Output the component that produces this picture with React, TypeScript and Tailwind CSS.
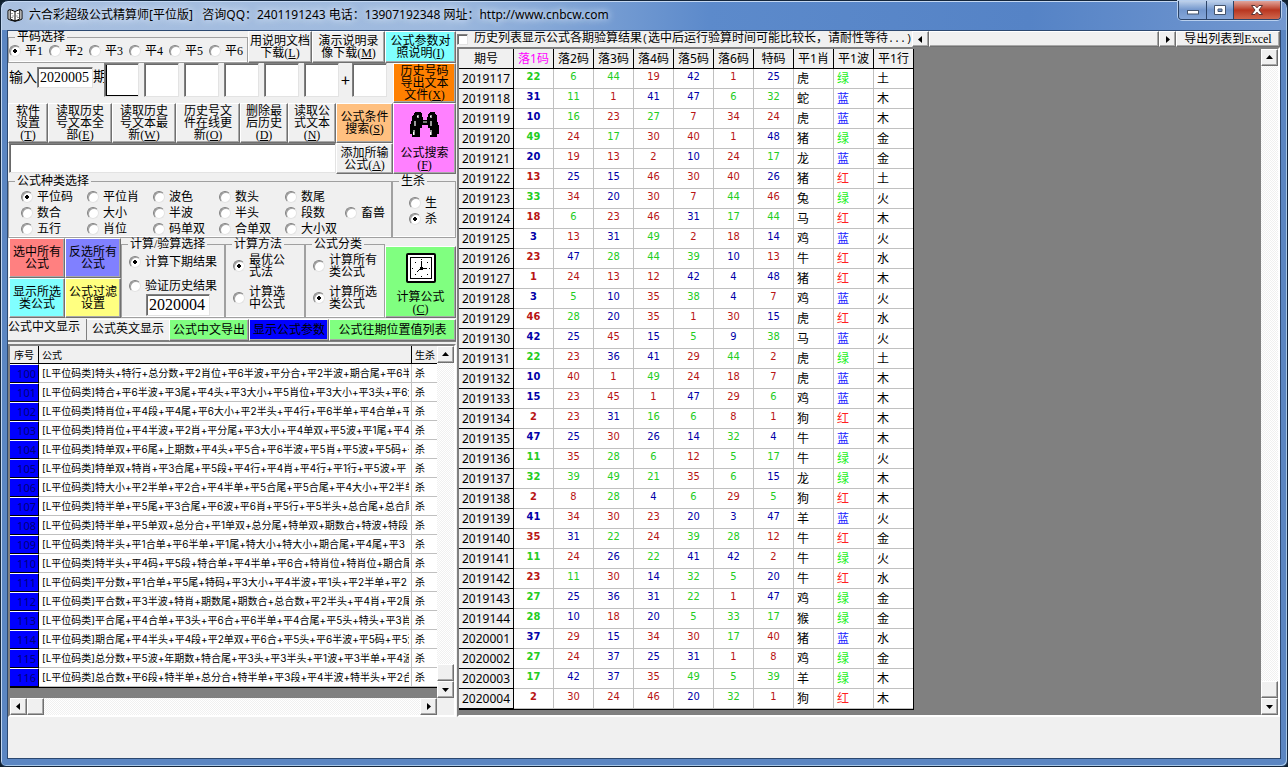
import { FC, ReactNode } from "react";
import clsx from "clsx";

const SONG = "font-['Liberation_Serif','Noto_Sans_CJK_SC',serif]";
const YAHEI = "font-['Noto_Sans','Noto_Sans_CJK_SC',sans-serif]";

const RED = [1, 2, 7, 8, 12, 13, 18, 19, 23, 24, 29, 30, 34, 35, 40, 45, 46];
const BLUE = [3, 4, 9, 10, 14, 15, 20, 25, 26, 31, 36, 37, 41, 42, 47, 48];

type Wave = "红" | "蓝" | "绿";

const waveOf = (n: number): Wave => (RED.includes(n) ? "红" : BLUE.includes(n) ? "蓝" : "绿");

const numberColor: Record<Wave, string> = {
  红: "text-[#b81414]",
  蓝: "text-[#0000a8]",
  绿: "text-[#22cc22]",
};

const waveColor: Record<Wave, string> = {
  红: "text-[#ff2020]",
  蓝: "text-[#2020ff]",
  绿: "text-[#20f020]",
};

// issue, six numbers + special number, zodiac, element
type Draw = [string, number[], string, string];

const draws: Draw[] = [
  ["2019117", [22, 6, 44, 19, 42, 1, 25], "虎", "土"],
  ["2019118", [31, 11, 1, 41, 47, 6, 32], "蛇", "木"],
  ["2019119", [10, 16, 23, 27, 7, 34, 24], "虎", "木"],
  ["2019120", [49, 24, 17, 30, 40, 1, 48], "猪", "金"],
  ["2019121", [20, 19, 13, 2, 10, 24, 17], "龙", "金"],
  ["2019122", [13, 25, 15, 46, 30, 40, 26], "猪", "土"],
  ["2019123", [33, 34, 20, 30, 7, 44, 46], "兔", "火"],
  ["2019124", [18, 6, 23, 46, 31, 17, 44], "马", "木"],
  ["2019125", [3, 13, 31, 49, 2, 18, 14], "鸡", "火"],
  ["2019126", [23, 47, 28, 44, 39, 10, 13], "牛", "水"],
  ["2019127", [1, 24, 13, 12, 42, 4, 48], "猪", "木"],
  ["2019128", [3, 5, 10, 35, 38, 4, 7], "鸡", "火"],
  ["2019129", [46, 28, 20, 35, 1, 30, 15], "虎", "水"],
  ["2019130", [42, 25, 45, 15, 5, 9, 38], "马", "火"],
  ["2019131", [22, 23, 36, 41, 29, 44, 2], "虎", "土"],
  ["2019132", [10, 40, 1, 49, 24, 18, 7], "虎", "木"],
  ["2019133", [15, 23, 45, 1, 47, 29, 6], "鸡", "木"],
  ["2019134", [2, 23, 31, 16, 6, 8, 1], "狗", "木"],
  ["2019135", [47, 25, 30, 26, 14, 32, 4], "牛", "木"],
  ["2019136", [11, 35, 28, 6, 12, 5, 17], "牛", "火"],
  ["2019137", [32, 39, 49, 21, 35, 6, 15], "龙", "木"],
  ["2019138", [2, 8, 28, 4, 6, 29, 5], "狗", "木"],
  ["2019139", [41, 34, 30, 23, 20, 3, 47], "羊", "火"],
  ["2019140", [35, 31, 22, 24, 39, 28, 12], "牛", "金"],
  ["2019141", [11, 24, 26, 22, 41, 42, 2], "牛", "火"],
  ["2019142", [23, 11, 30, 14, 32, 5, 20], "牛", "水"],
  ["2019143", [27, 25, 36, 31, 22, 1, 47], "鸡", "金"],
  ["2019144", [28, 10, 18, 20, 5, 33, 17], "猴", "金"],
  ["2020001", [37, 29, 15, 34, 30, 17, 40], "猪", "水"],
  ["2020002", [27, 24, 37, 25, 31, 1, 8], "鸡", "金"],
  ["2020003", [17, 42, 37, 35, 49, 5, 39], "羊", "木"],
  ["2020004", [2, 30, 24, 46, 20, 32, 1], "狗", "木"],
];

const drawColumns = ["期号", "落1码", "落2码", "落3码", "落4码", "落5码", "落6码", "特码", "平1肖", "平1波", "平1行"];

const formulas = [
  "特头+特行+总分数+平2肖位+平6半波+平分合+平2半波+期合尾+平6半",
  "特合+平6半波+平3尾+平4头+平3大小+平5肖位+平3大小+平3头+平6大",
  "特肖位+平4段+平4尾+平6大小+平2半头+平4行+平6半单+平4合单+平",
  "特肖位+平4半波+平2肖+平分尾+平3大小+平4单双+平5波+平1尾+平4",
  "特单双+平6尾+上期数+平4头+平5合+平6半波+平5肖+平5波+平5码+平",
  "特单双+特肖+平3合尾+平5段+平4行+平4肖+平4行+平1行+平5波+平",
  "特大小+平2半单+平2合+平4半单+平5合尾+平5合尾+平4大小+平2半单",
  "特半单+平5尾+平3合尾+平6波+平6肖+平5行+平5半头+总合尾+总合尾",
  "特半单+平5单双+总分合+平1单双+总分尾+特单双+期数合+特波+特段",
  "特半头+平1合单+平6半单+平1尾+特大小+特大小+期合尾+平4尾+平3",
  "特半头+平4码+平5段+特合单+平4半单+平6合+特肖位+特肖位+期合尾",
  "平分数+平1合单+平5尾+特码+平3大小+平4半波+平1头+平2半单+平2",
  "平合数+平3半波+特肖+期数尾+期数合+总合数+平2半头+平4肖+平2尾",
  "平合尾+平4合单+平3头+平6合+平6半单+平4合尾+平5头+特头+平3肖",
  "期合尾+平4半头+平4段+平2单双+平6合+平5头+平6半波+平5码+平5波",
  "总分数+平5波+年期数+特合尾+平3头+平3半头+平1波+平3半单+平4波",
  "总合数+平6段+特半单+总分合+特半单+平3段+平4半波+特半头+平2合",
];

const kinds = [
  ["平位码", "平位肖", "波色", "数头", "数尾", ""],
  ["数合", "大小", "半波", "半头", "段数", "畜兽"],
  ["五行", "肖位", "码单双", "合单双", "大小双", ""],
];

type PushButtonProps = {
  lines: string[];
  hotkey?: string;
  className?: string;
  icon?: ReactNode;
};

// raised button; the hotkey goes in brackets after the last line
const PushButton: FC<PushButtonProps> = ({ lines, hotkey, className = "bg-[#f0f0f0]", icon }) => (
  <button
    type="button"
    className={clsx(
      "flex min-w-0 flex-col items-center justify-center overflow-hidden whitespace-nowrap border border-t-white border-l-white border-r-[#707070] border-b-[#707070] leading-3 shadow-[inset_-1px_-1px_0_#a8a8a8]",
      className
    )}
  >
    {icon}
    {lines.map((line, i) => (
      <span key={i} className="block">
        {line}
        {hotkey && i === lines.length - 1 && (
          <>
            (<u>{hotkey}</u>)
          </>
        )}
      </span>
    ))}
  </button>
);

type RadioProps = {
  name: string;
  label: string[];
  checked?: boolean;
  className?: string;
};

const Radio: FC<RadioProps> = ({ name, label, checked, className = "gap-1" }) => (
  <label className={clsx("flex items-center whitespace-nowrap leading-3", className)}>
    <input
      type="radio"
      name={name}
      defaultChecked={checked}
      className="size-3 shrink-0 appearance-none rounded-full border border-[#808080] border-r-[#e3e3e3] border-b-[#e3e3e3] bg-white shadow-[inset_1px_1px_0_#a0a0a0] checked:bg-[radial-gradient(circle,#000_0_2px,#fff_2px)]"
    />
    <span>
      {label.map((line) => (
        <span key={line} className="block">
          {line}
        </span>
      ))}
    </span>
  </label>
);

type GroupProps = {
  title: string;
  className?: string;
  children: ReactNode;
};

const Group: FC<GroupProps> = ({ title, className, children }) => (
  <fieldset className={clsx("min-w-0 border border-[#a0a0a0] shadow-[inset_0_-1px_0_#fff]", className)}>
    <legend className="ml-1.5 px-0.5 leading-3">{title}</legend>
    {children}
  </fieldset>
);

const arrows = {
  up: "M4 9h7L7.5 5z",
  down: "M4 6h7L7.5 10z",
  left: "M9 4v7L5 7.5z",
  right: "M6 4v7l4-3.5z",
};

const raised = "border border-t-white border-l-white border-r-[#707070] border-b-[#707070] bg-[#f0f0f0] shadow-[inset_-1px_-1px_0_#a8a8a8]";
const track = "bg-[repeating-conic-gradient(#fff_0_25%,#f0f0f0_0_50%)] bg-[length:2px_2px]";

const ScrollArrow: FC<{ dir: keyof typeof arrows }> = ({ dir }) => (
  <button type="button" aria-label={dir} className={clsx("flex h-full max-h-[17px] min-h-4 w-[17px] shrink-0 items-center justify-center", raised)}>
    <svg viewBox="0 0 15 15" className="size-[15px] shrink-0">
      <path d={arrows[dir]} fill="#000" />
    </svg>
  </button>
);

const VScroll: FC = () => (
  <div className={clsx("grid w-[17px] shrink-0 grid-rows-[17px_1fr_17px_17px]", track)}>
    <ScrollArrow dir="up" />
    <div />
    <div className={raised} />
    <ScrollArrow dir="down" />
  </div>
);

const BookIcon = () => (
  <svg viewBox="0 0 16 14" className="h-3.5 w-4 shrink-0">
    <path d="M1 2.5 3 1.5 8 3.5 13 1.5 15 2.5V11L13 12 8 13.3 3 12 1 11z" fill="#fff" stroke="#000" />
    <path d="M8 3.5V13M3.2 2v9L8 13M12.8 2v9L8 13" fill="none" stroke="#000" />
    <path d="M5 5v1M6 7.500v1M5 9v1M11 5v1M10 7.500v1M11 9v1" stroke="#444" />
  </svg>
);

const BinocularsIcon = () => (
  <svg viewBox="0 0 30 25" className="mb-2.5 h-[25px] w-[30px]" shapeRendering="crispEdges">
    <path d="M5 0h5l2 2v3h1v3h4V5h1V2l2-2h5v2l2 2v4l1 3 1 3v8h-2v3h-7v-9h-2v-3h-6v3h-2v9H2v-3H0v-8l1-3 1-3V4l2-2z" fill="#000" />
    <path d="M7 3h2v3H7zM20 3h2v3h-2zM4 9h2v5H4zM20 9h2v5h-2zM3 18h2v5H3zM20 18h2v5h-2z" fill="#999" />
    <path d="M13 9h4v2h-4z" fill="#777" />
    <path d="M7 4h1v1H7zM20 4h1v1h-1zM3 20h1v3H3zM20 20h1v3h-1z" fill="#fff" />
  </svg>
);

const ClockIcon = () => (
  <svg viewBox="0 0 30 30" className="mb-2 size-[30px]">
    <rect x="1" y="1" width="28" height="28" rx="1" fill="#fff" stroke="#000" strokeWidth="2" />
    <rect x="4.5" y="4.5" width="21" height="21" fill="#fff" stroke="#000" />
    <path d="M15.500 8v8M11 19l4-4M15 15.500h6" stroke="#000" fill="none" />
    <path d="M14 14h3v3h-3zM15 6h1v1h-1zM15 23h1v1h-1zM6 15h1v1H6zM23 15h1v1h-1zM9 9h1v1H9zM21 9h1v1h-1zM9 21h1v1H9zM21 21h1v1h-1z" fill="#000" />
  </svg>
);

const TitleBar = () => (
  <header className={clsx("flex h-[29px] shrink-0 items-start justify-between text-xs", YAHEI)}>
    <h1 className="flex items-center gap-1.5 pt-1 leading-5 whitespace-pre text-black [text-shadow:0_0_6px_#dfeafa,0_0_8px_#dfeafa]">
      <BookIcon />
      {"六合彩超级公式精算师[平位版]   咨询QQ：2401191243 电话：13907192348 网址：http://www.cnbcw.com"}
    </h1>
    <div className="flex h-[19px] overflow-hidden rounded-b border border-t-0 border-[#2c4468] shadow-[0_0_0_1px_#b8cfee]">
      <button type="button" aria-label="最小化" className="flex w-7 items-center justify-center border-r border-[#2c4468] bg-linear-to-b from-[#bdd0ea] via-[#7296cc] to-[#84a6d8]">
        <svg viewBox="0 0 12 10" className="h-2.5 w-3">
          <rect x=".5" y="5.500" width="11" height="3.500" fill="#fff" stroke="#44546c" />
        </svg>
      </button>
      <button type="button" aria-label="最大化" className="flex w-[27px] items-center justify-center border-r border-[#2c4468] bg-linear-to-b from-[#bdd0ea] via-[#7296cc] to-[#84a6d8]">
        <svg viewBox="0 0 12 10" className="h-2.5 w-3">
          <path d="M.5.5h11v9H.5zM4 4v2.500h4V4z" fill="#fff" stroke="#44546c" fillRule="evenodd" />
        </svg>
      </button>
      <button type="button" aria-label="关闭" className="flex w-[46px] items-center justify-center bg-linear-to-b from-[#e0a59c] via-[#b8351f] to-[#d0664c]">
        <svg viewBox="0 0 12 10" className="h-2.5 w-3">
          <path d="M.5.5h3.500L6 2.800 8 .5h3.500L8 5l3.500 4.500H8L6 7.200 4 9.500H.5L4 5z" fill="#fff" stroke="#5a3434" />
        </svg>
      </button>
    </div>
  </header>
);

const sunken = "border border-[#808080] border-r-[#e3e3e3] border-b-[#e3e3e3] bg-white shadow-[inset_1px_1px_0_#696969]";

const NumberBox: FC<{ index: number }> = ({ index }) => (
  <input
    aria-label={`号码${index}`}
    className={clsx(
      "h-[34px] w-[35px] shrink-0 text-center text-base outline-none",
      sunken,
      index === 1 && "shadow-[inset_1px_1px_0_#696969,inset_2px_-1px_0_#000]!"
    )}
  />
);

const InputPanel = () => (
  <div className="flex h-[111px]">
    <div className="flex min-w-0 flex-1 flex-col">
      <div className="flex h-10 items-start">
        <label className="flex items-center pt-1 pl-px text-sm leading-5">
          输入
          <input defaultValue="2020005" className={clsx("h-[21px] w-14 pl-0.5 outline-none", sunken)} />
        </label>
        <span className="w-[11px] overflow-hidden pt-1 text-sm leading-5 whitespace-nowrap">期</span>
        <div className="flex gap-[5px]">
          {[1, 2, 3, 4, 5, 6].map((i) => (
            <NumberBox key={i} index={i} />
          ))}
        </div>
        <span className="w-[13px] text-center font-['Noto_Sans_CJK_SC',sans-serif] text-base leading-8">+</span>
        <NumberBox index={7} />
      </div>
      <div className="flex flex-1">
        <div className="flex min-w-0 flex-1 flex-col">
          <div className="grid h-10 grid-cols-[40px_64px_64px_64px_48px_48px]">
            <PushButton lines={["软件", "设置", ""]} hotkey="T" />
            <PushButton lines={["读取历史", "号文本全", "部"]} hotkey="E" />
            <PushButton lines={["读取历史", "号文本最", "新"]} hotkey="W" />
            <PushButton lines={["历史号文", "件在线更", "新"]} hotkey="O" />
            <PushButton lines={["删除最", "后历史", ""]} hotkey="D" />
            <PushButton lines={["读取公", "式文本", ""]} hotkey="N" />
          </div>
          <input aria-label="公式" className={clsx("ml-px h-[30px] outline-none", sunken)} />
        </div>
        <div className="grid w-[57px] grid-rows-[40px_31px]">
          <PushButton lines={["公式条件", "搜索"]} hotkey="S" className="bg-[#ffc080]" />
          <PushButton lines={["添加所输", "公式"]} hotkey="A" />
        </div>
      </div>
    </div>
    <div className="grid w-[63px] grid-rows-[40px_71px]">
      <PushButton lines={["历史号码", "导出文本", "文件"]} hotkey="X" className="bg-[#ff8000]" />
      <PushButton lines={["公式搜索", ""]} hotkey="F" className="bg-[#ff80ff] pt-1.5" icon={<BinocularsIcon />} />
    </div>
  </div>
);

const CalcPanel = () => (
  <div className="flex h-20">
    <div className="ml-px grid w-28 grid-cols-2 grid-rows-2">
      <PushButton lines={["选中所有", "公式"]} className="bg-[#ff8080]" />
      <PushButton lines={["反选所有", "公式"]} className="bg-[#8080ff]" />
      <PushButton lines={["显示所选", "类公式"]} className="bg-[#80ffff]" />
      <PushButton lines={["公式过滤", "设置"]} className="bg-[#ffff80]" />
    </div>
    <Group title="计算/验算选择" className="w-[104px]">
      <div className="flex flex-col items-start gap-3 pt-1.5 pl-[7px]">
        <Radio name="calc" label={["计算下期结果"]} checked />
        <Radio name="calc" label={["验证历史结果"]} />
      </div>
      <input aria-label="验证期号" defaultValue="2020004" className={clsx("mt-0.5 ml-6 block h-[22px] w-16 pl-0.5 text-base outline-none", sunken)} />
    </Group>
    <Group title="计算方法" className="w-20">
      <div className="flex flex-col gap-2 pt-1 pl-[7px]">
        <Radio name="method" label={["最优公", "式法"]} checked />
        <Radio name="method" label={["计算选", "中公式"]} />
      </div>
    </Group>
    <Group title="公式分类" className="w-20">
      <div className="flex flex-col gap-2 pt-1 pl-[7px]">
        <Radio name="scope" label={["计算所有", "类公式"]} />
        <Radio name="scope" label={["计算所选", "类公式"]} checked />
      </div>
    </Group>
    <div className="flex flex-1 pt-2">
      <PushButton lines={["计算公式", ""]} hotkey="C" className="flex-1 bg-[#80ff80] pt-1" icon={<ClockIcon />} />
    </div>
  </div>
);

const FormulaList = () => (
  <div className="mt-0.5 flex flex-1 flex-col border-2 border-[#808080] border-r-white border-b-white bg-[#f0f0f0] text-[10px]">
    <div className="flex flex-1">
      <div className="flex min-w-0 flex-1 flex-col bg-[#808080]">
        <table className="w-full table-fixed border-separate border-spacing-0 border-b border-black bg-white font-['Inter','Noto_Sans_CJK_SC',sans-serif]">
          <thead>
            <tr className="h-[18px] bg-[#f0f0f0] text-left leading-4 whitespace-nowrap">
              <th className="w-[29px] border-r border-b border-black p-0 pl-1 font-normal">序号</th>
              <th className="border-r border-b border-black p-0 pl-[3px] font-normal">公式</th>
              <th className="w-[25px] border-b border-black p-0 pl-[3px] font-normal">生杀</th>
            </tr>
          </thead>
          <tbody>
            {formulas.map((formula, i) => (
              <tr key={i} className="leading-[17px] whitespace-nowrap">
                <td
                  className={clsx(
                    "border-t border-r border-b border-t-white border-r-black border-b-black bg-[#0000ff] p-0 pr-0.5 text-right text-[11px] text-[#00007a]",
                    YAHEI
                  )}
                >
                  {100 + i}
                </td>
                <td className="border-r border-b border-[#c0c0c0] p-0 pr-0.5 pl-[3px]">
                  <div className="overflow-hidden">[L平位码类]{formula}</div>
                </td>
                <td className="border-b border-[#c0c0c0] p-0 pl-[3px]">杀</td>
              </tr>
            ))}
          </tbody>
        </table>
      </div>
      <VScroll />
    </div>
    <div className="flex h-[17px] pr-[17px]">
      <div className={clsx("flex flex-1", track)}>
        <ScrollArrow dir="left" />
        <div className={clsx("w-[17px]", raised)} />
        <div className="flex-1" />
        <ScrollArrow dir="right" />
      </div>
    </div>
  </div>
);

const ControlPanel = () => (
  <section className="flex w-[448px] shrink-0 flex-col">
    <div className="flex h-8">
      <Group title="平码选择" className="w-60">
        <div className="flex pt-0.5">
          {["平1", "平2", "平3", "平4", "平5", "平6"].map((label, i) => (
            <Radio key={label} name="ping" label={[label]} checked={i === 0} className="w-10 shrink-0 gap-1" />
          ))}
        </div>
      </Group>
      <PushButton lines={["用说明文档", "下载"]} hotkey="L" className="w-16 bg-[#f0f0f0]" />
      <PushButton lines={["演示说明录", "像下载"]} hotkey="M" className="w-[73px] bg-[#f0f0f0]" />
      <PushButton lines={["公式参数对", "照说明"]} hotkey="I" className="flex-1 bg-[#80ffff]" />
    </div>
    <InputPanel />
    <div className="flex h-16 pt-px">
      <Group title="公式种类选择" className="w-96">
        <div className="grid grid-cols-[66px_66px_66px_66px_60px_1fr] pt-0.5 pl-3">
          {kinds.flat().map((kind, i) => (
            <div key={i} className="flex h-4 items-center">
              {kind && <Radio name="kind" label={[kind]} checked={i === 0} />}
            </div>
          ))}
        </div>
      </Group>
      <Group title="生杀" className="flex-1">
        <div className="flex flex-col gap-1 pt-2.5 pl-4">
          <Radio name="kill" label={["生"]} />
          <Radio name="kill" label={["杀"]} checked />
        </div>
      </Group>
    </div>
    <CalcPanel />
    <div className="grid h-6 grid-cols-[79px_82px_80px_80px_1fr] border-b-2 border-[#808080] pt-px">
      <button type="button" className="border-r border-[#808080] pb-1.5 text-left leading-4 whitespace-nowrap">
        公式中文显示
      </button>
      <button type="button" className="border-t border-white pb-1 text-center leading-4 whitespace-nowrap">
        公式英文显示
      </button>
      <PushButton lines={["公式中文导出"]} className="bg-[#80ff80]" />
      <PushButton lines={["显示公式参数"]} className="bg-[#0000ff]" />
      <PushButton lines={["公式往期位置值列表"]} className="bg-[#80ff80]" />
    </div>
    <FormulaList />
  </section>
);

const HistoryPanel = () => (
  <section className="flex min-w-0 flex-1 flex-col pl-px">
    <div className="flex h-4 items-center">
      <label className="flex items-center gap-1.5 whitespace-nowrap">
        <input type="checkbox" className={clsx("size-[11px] appearance-none", sunken)} />
        <span className="w-[438px] leading-4">
          历史列表显示公式各期验算结果
          <span className="font-['Liberation_Mono',monospace] text-[10px]">(</span>
          选中后运行验算时间可能比较长，请耐性等待
          <span className="font-['Liberation_Mono',monospace] text-[10px]">...)</span>
        </span>
      </label>
      <div className="flex h-4 flex-1">
        <ScrollArrow dir="left" />
        <div className={clsx("flex-1", raised)} />
        <ScrollArrow dir="right" />
      </div>
      <PushButton lines={["导出列表到Excel"]} className="h-4 w-[104px] bg-[#f0f0f0]" />
    </div>
    <div className="flex flex-1 border-2 border-t-[#808080] border-r-white border-b-white border-l-[#808080] bg-[#808080]">
      <div className="min-w-0 flex-1">
        <table className="w-[455px] table-fixed border-separate border-spacing-0 border-r border-b border-black bg-white">
          <thead>
            <tr className={clsx("bg-[#f0f0f0] text-xs whitespace-nowrap", YAHEI)}>
              {drawColumns.map((name, i) => (
                <th
                  key={name}
                  className={clsx(
                    "h-5 border-b border-black p-0 text-center leading-[19px] font-normal",
                    i === 0 && "w-[55px]",
                    i > 0 && i < 10 && "w-10",
                    i < 10 && "border-r",
                    i === 1 && "text-[#ff00ff]"
                  )}
                >
                  {name}
                </th>
              ))}
            </tr>
          </thead>
          <tbody>
            {draws.map(([issue, numbers, zodiac, element]) => {
              const wave = waveOf(numbers[0]);
              return (
                <tr key={issue} className={clsx("text-xs", YAHEI)}>
                  <td className="h-5 border-r border-b border-black bg-[#f0f0f0] p-0 text-center leading-[19px]">{issue}</td>
                  {numbers.map((n, i) => (
                    <td
                      key={i}
                      className={clsx(
                        "border-r border-b border-[#c0c0c0] p-0 text-center align-top font-['DejaVu_Sans_Condensed','DejaVu_Sans',sans-serif] text-[11px] leading-[15px]",
                        i === 0 && "font-bold",
                        numberColor[waveOf(n)]
                      )}
                    >
                      {n}
                    </td>
                  ))}
                  <td className="border-r border-b border-[#c0c0c0] p-0 pl-[3px] leading-[19px]">{zodiac}</td>
                  <td className={clsx("border-r border-b border-[#c0c0c0] p-0 pl-[3px] leading-[19px]", waveColor[wave])}>{wave}</td>
                  <td className="border-b border-[#c0c0c0] p-0 pl-[3px] leading-[19px]">{element}</td>
                </tr>
              );
            })}
          </tbody>
        </table>
      </div>
      <VScroll />
    </div>
  </section>
);

export default function App() {
  return (
    <div className="min-h-screen bg-[#10202e]">
      <div className="flex min-h-screen flex-col rounded-t-lg rounded-b-md border border-[#14263c] bg-[#5b86c2] bg-[linear-gradient(90deg,#a9c0e0_0,#9db9de_35%,#5c8acb_55%,#5583c6_80%,#7398d0_100%)] bg-[length:100%_29px] bg-no-repeat px-1.5 pb-[7px] shadow-[inset_1px_1px_0_#c4d8f2,inset_-1px_-1px_0_#a8c8e8]">
        <TitleBar />
        <main className={clsx("flex flex-1 flex-col border border-[#2c4870] bg-[#f0f0f0] text-xs text-black", SONG)}>
          <div className="flex flex-1">
            <ControlPanel />
            <HistoryPanel />
          </div>
          <footer className="h-[41px] shrink-0" />
        </main>
      </div>
    </div>
  );
}
